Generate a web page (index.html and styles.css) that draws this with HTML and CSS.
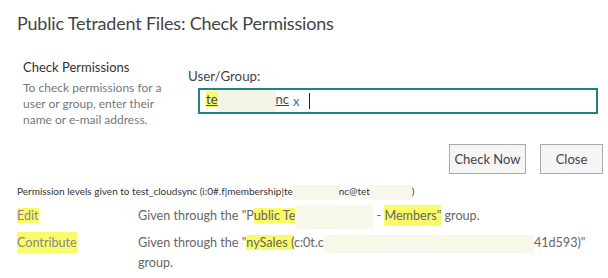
FILE: index.html
```html
<!DOCTYPE html>
<html lang="en">
<head>
    <meta charset="UTF-8">
    <title>Check Permissions</title>
    <link rel="stylesheet" href="styles.css">
</head>
<body>
    <div class="dialog">
        <h1 class="dlg-title">Public Tetradent Files: Check Permissions</h1>

        <div class="section">
            <div class="section-info">
                <h3>Check Permissions</h3>
                <p>To check permissions for a user or group, enter their name or e-mail address.</p>
            </div>
            <div class="section-field">
                <label for="picker">User/Group:</label>
                <div class="picker" id="picker">
                    <span class="resolved"><span class="hl">te</span><span class="redact redact-user"></span>nc</span>
                    <span class="remove">x</span>
                    <span class="caret"></span>
                </div>
            </div>
        </div>

        <div class="buttons">
            <button>Check Now</button>
            <button class="btn-close">Close</button>
        </div>

        <div class="results">
            <p class="results-head">Permission levels given to test_cloudsync (i:0#.f|membership|te<span class="redact r-a"></span>nc@tet<span class="redact r-b"></span>)</p>
            <table class="perm-table">
                <tr>
                    <td class="level"><span class="hl">Edit</span></td>
                    <td>Given through the "P<span class="hl">ublic Te</span><span class="redact r-c"></span> - <span class="hl hl-tall">Members"</span> group.</td>
                </tr>
                <tr>
                    <td class="level"><span class="hl hl-tall">Contribute</span></td>
                    <td>Given through the "<span class="hl">nySales (</span>c:0t.c<span class="redact r-d"></span>41d593)" <span>group.</span></td>
                </tr>
            </table>
        </div>
    </div>
</body>
</html>
```

FILE: styles.css
```css
body {
    margin: 0;
    font-family: Lato, "Open Sans", sans-serif;
    background-color: #ffffff;
    color: #444;
}
.dialog {
    width: 608px;
    height: 278px;
    overflow: hidden;
}
.dlg-title {
    margin: 0;
    padding: 9px 0 0 17px;
    font-size: 18px;
    font-weight: 400;
    letter-spacing: -0.2px;
    color: #444;
    line-height: 28px;
}
.section {
    display: flex;
    margin-top: 20px;
}
.section-info {
    width: 145px;
    padding-left: 23px;
    padding-right: 20px;
}
.section-info h3 {
    margin: 0;
    font-size: 13px;
    font-weight: 400;
    color: #333;
    line-height: 20px;
}
.section-info p {
    margin: 3px 0 0;
    font-size: 12px;
    color: #777;
    line-height: 16px;
}
.section-field {
    padding-top: 10px;
}
.section-field label {
    display: block;
    font-size: 13.3px;
    color: #444;
    line-height: 18px;
}
.picker {
    display: flex;
    align-items: center;
    width: 390px;
    height: 22px;
    margin: 3px 0 0 10px;
    padding-left: 6px;
    border: 2px solid #1a8584;
    font-size: 13px;
}
.resolved {
    color: #444;
    text-decoration: underline;
}
.remove {
    margin-left: 4px;
    color: #3a6e9a;
}
.caret {
    width: 1px;
    height: 16px;
    margin-left: 10px;
    background: #222;
}
.hl {
    background-color: #fbfb6a;
}
.hl-tall {
    padding: 3px 0;
}
.redact {
    display: inline-block;
    height: 15px;
    vertical-align: middle;
    background-color: #f7f7ea;
}
.redact-user {
    width: 58px;
    height: 22px;
    background-color: #f2f5e6;
}
.buttons {
    display: flex;
    justify-content: flex-end;
    gap: 14px;
    margin-top: 16px;
    padding-right: 5px;
}
.buttons button {
    width: 77px;
    height: 30px;
    padding: 0;
    white-space: nowrap;
    border: 1px solid #ababab;
    background-color: #f5f5f5;
    font-family: inherit;
    font-size: 13px;
    color: #444;
}
.buttons .btn-close {
    width: 63px;
}
.results {
    padding-left: 17px;
    margin-top: 10px;
}
.results-head {
    margin: 0;
    font-size: 10px;
    color: #333;
    line-height: 14px;
    white-space: nowrap;
}
.r-a {
    width: 46px;
}
.r-b {
    width: 42px;
}
.r-c {
    width: 78px;
    height: 24px;
    margin: -4px 0;
}
.r-d {
    width: 210px;
    height: 18px;
    margin: -2px 0;
}
.perm-table {
    border-collapse: collapse;
    margin-top: 6px;
    font-size: 12.6px;
    color: #666;
}
.perm-table td {
    padding: 0 0 7px;
    vertical-align: top;
    line-height: 20px;
}
.perm-table .level {
    width: 121px;
    color: #888;
}
.perm-table td + td {
    width: 460px;
}
```
